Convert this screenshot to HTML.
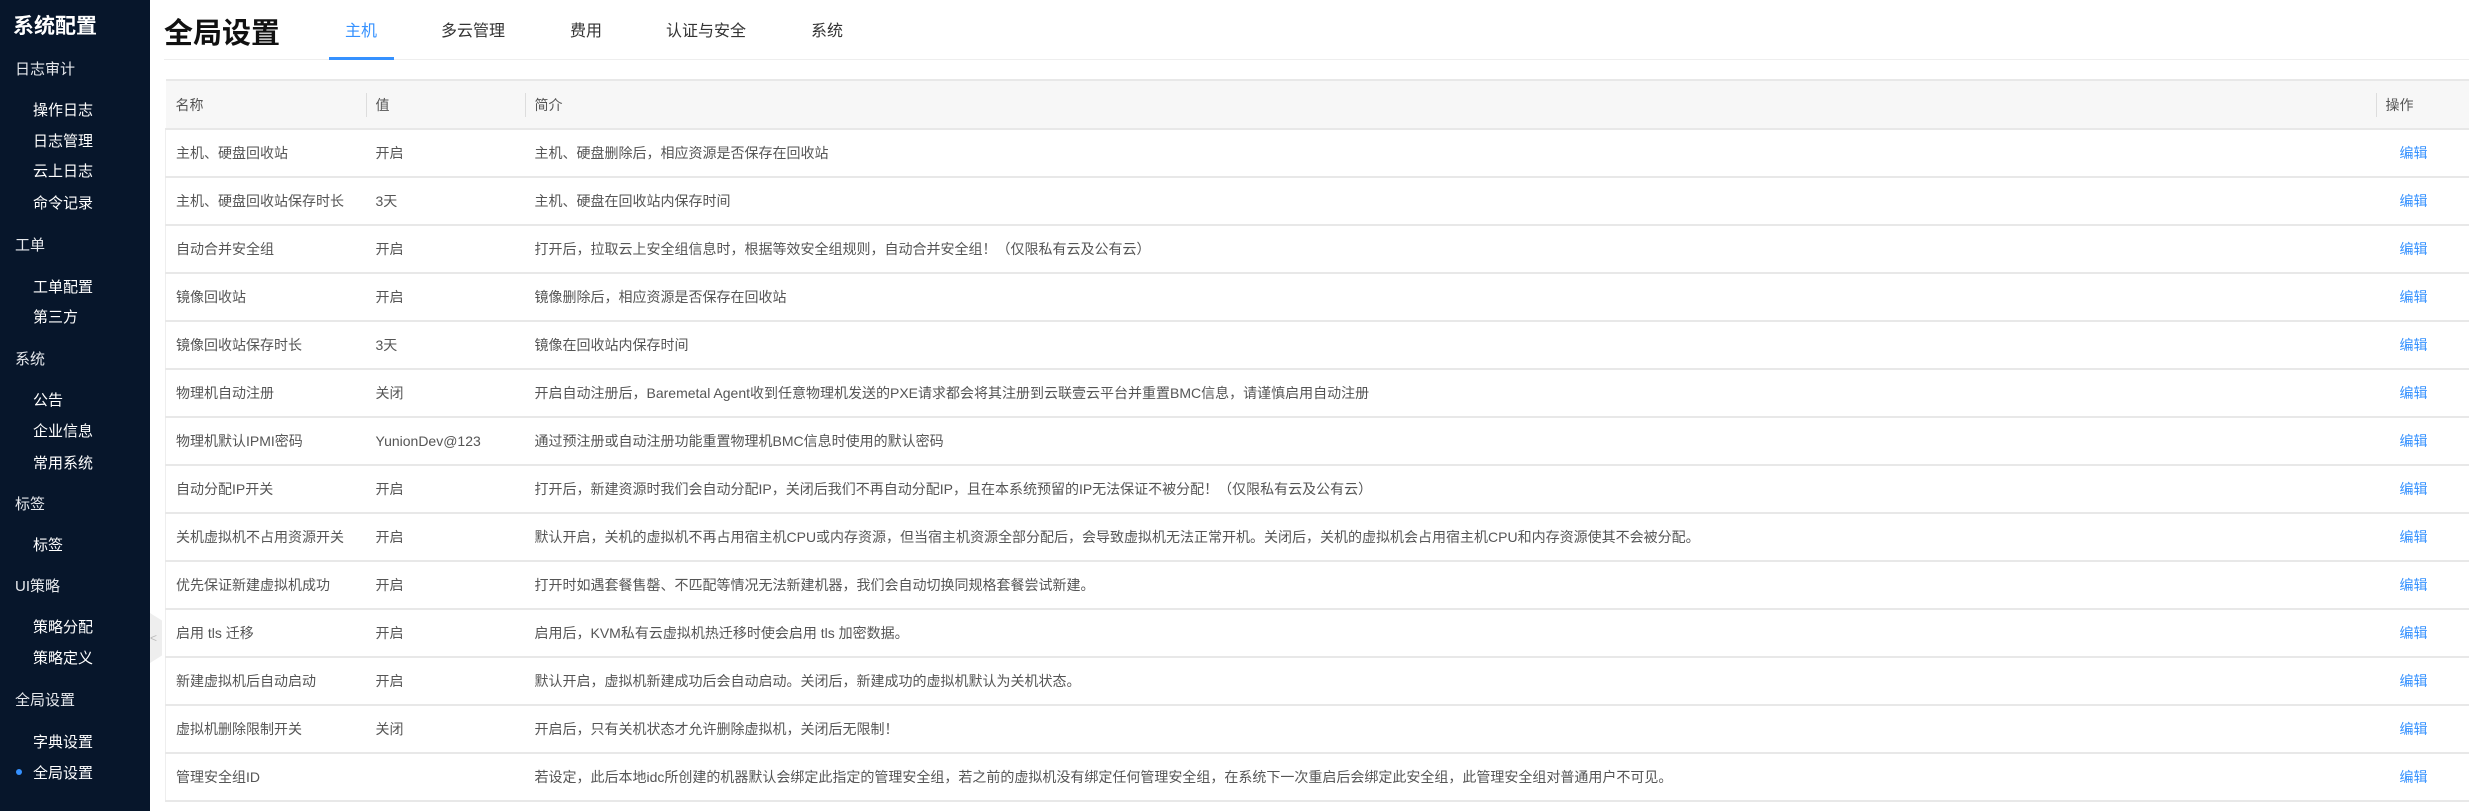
<!DOCTYPE html>
<html><head><meta charset="utf-8"><style>
*{margin:0;padding:0;box-sizing:border-box}
body{width:2469px;height:811px;overflow:hidden;background:#fff;font-family:"Liberation Sans","Noto Sans CJK SC",sans-serif;position:relative}
.side{position:absolute;left:0;top:0;width:150px;height:811px;background:#07162b;color:#fff}
.side div{position:absolute;font-size:15px;white-space:nowrap}
.side .t{font-size:21px;font-weight:bold;left:13px}
.side .s{left:15px;color:#e6e8ec}
.side .i{left:33px;color:#fff}
.dot{position:absolute;left:16px;width:6px;height:6px;border-radius:50%;background:#3591ff}
.handle{position:absolute;left:150px;top:613px;width:12px;height:50px;background:#eee;clip-path:polygon(0 0,100% 15%,100% 85%,0 100%);color:#bbb;font-size:12px;line-height:50px}
.title{position:absolute;left:164px;top:10px;font-size:29px;font-weight:bold;color:#111}
.tab{position:absolute;top:17px;font-size:16px;color:#333}
.ul{position:absolute;left:329px;top:57px;width:65px;height:3px;background:#3591ff}
.div{position:absolute;left:164px;right:0;top:59px;height:1px;background:#eee}
table{position:absolute;left:165px;top:79px;width:2304px;border-collapse:collapse;font-size:14px;color:#555}
th{background:#f7f7f7;height:49px;text-align:left;font-weight:normal;color:#555;border-top:2px solid #e8e8e8;border-bottom:2px solid #e8e8e8;padding-left:10px;position:relative}
th.d:before{content:"";position:absolute;left:0;top:12px;height:24px;width:1px;background:#ddd}
td{height:48px;border-bottom:2px solid #e8e8e8;padding-left:10px;white-space:nowrap}
td:first-child{border-left:1px solid #eee}
a{color:#3591ff;text-decoration:none;padding-left:14px}
</style></head><body>
<div class="side">
<div class="t" style="top:10px">系统配置</div>
<div class="s" style="top:58px">日志审计</div>
<div class="i" style="top:99px">操作日志</div>
<div class="i" style="top:130px">日志管理</div>
<div class="i" style="top:160px">云上日志</div>
<div class="i" style="top:192px">命令记录</div>
<div class="s" style="top:234px">工单</div>
<div class="i" style="top:276px">工单配置</div>
<div class="i" style="top:306px">第三方</div>
<div class="s" style="top:348px">系统</div>
<div class="i" style="top:389px">公告</div>
<div class="i" style="top:420px">企业信息</div>
<div class="i" style="top:452px">常用系统</div>
<div class="s" style="top:493px">标签</div>
<div class="i" style="top:534px">标签</div>
<div class="s" style="top:575px">UI策略</div>
<div class="i" style="top:616px">策略分配</div>
<div class="i" style="top:647px">策略定义</div>
<div class="s" style="top:689px">全局设置</div>
<div class="i" style="top:731px">字典设置</div>
<span class="dot" style="top:769px"></span>
<div class="i" style="top:762px">全局设置</div>
</div>
<div class="handle">&lt;</div>
<div class="title">全局设置</div>
<div class="tab" style="left:345px;color:#3591ff">主机</div>
<div class="tab" style="left:441px">多云管理</div>
<div class="tab" style="left:570px">费用</div>
<div class="tab" style="left:666px">认证与安全</div>
<div class="tab" style="left:811px">系统</div>
<div class="div"></div><div class="ul"></div>
<table>
<tr><th style="width:200px">名称</th><th class="d" style="width:159px">值</th><th class="d" style="width:1851px">简介</th><th class="d">操作</th></tr>
<tr><td>主机、硬盘回收站</td><td>开启</td><td>主机、硬盘删除后，相应资源是否保存在回收站</td><td><a>编辑</a></td></tr>
<tr><td>主机、硬盘回收站保存时长</td><td>3天</td><td>主机、硬盘在回收站内保存时间</td><td><a>编辑</a></td></tr>
<tr><td>自动合并安全组</td><td>开启</td><td>打开后，拉取云上安全组信息时，根据等效安全组规则，自动合并安全组！（仅限私有云及公有云）</td><td><a>编辑</a></td></tr>
<tr><td>镜像回收站</td><td>开启</td><td>镜像删除后，相应资源是否保存在回收站</td><td><a>编辑</a></td></tr>
<tr><td>镜像回收站保存时长</td><td>3天</td><td>镜像在回收站内保存时间</td><td><a>编辑</a></td></tr>
<tr><td>物理机自动注册</td><td>关闭</td><td>开启自动注册后，Baremetal Agent收到任意物理机发送的PXE请求都会将其注册到云联壹云平台并重置BMC信息，请谨慎启用自动注册</td><td><a>编辑</a></td></tr>
<tr><td>物理机默认IPMI密码</td><td>YunionDev@123</td><td>通过预注册或自动注册功能重置物理机BMC信息时使用的默认密码</td><td><a>编辑</a></td></tr>
<tr><td>自动分配IP开关</td><td>开启</td><td>打开后，新建资源时我们会自动分配IP，关闭后我们不再自动分配IP，且在本系统预留的IP无法保证不被分配！（仅限私有云及公有云）</td><td><a>编辑</a></td></tr>
<tr><td>关机虚拟机不占用资源开关</td><td>开启</td><td>默认开启，关机的虚拟机不再占用宿主机CPU或内存资源，但当宿主机资源全部分配后，会导致虚拟机无法正常开机。关闭后，关机的虚拟机会占用宿主机CPU和内存资源使其不会被分配。</td><td><a>编辑</a></td></tr>
<tr><td>优先保证新建虚拟机成功</td><td>开启</td><td>打开时如遇套餐售罄、不匹配等情况无法新建机器，我们会自动切换同规格套餐尝试新建。</td><td><a>编辑</a></td></tr>
<tr><td>启用 tls 迁移</td><td>开启</td><td>启用后，KVM私有云虚拟机热迁移时使会启用 tls 加密数据。</td><td><a>编辑</a></td></tr>
<tr><td>新建虚拟机后自动启动</td><td>开启</td><td>默认开启，虚拟机新建成功后会自动启动。关闭后，新建成功的虚拟机默认为关机状态。</td><td><a>编辑</a></td></tr>
<tr><td>虚拟机删除限制开关</td><td>关闭</td><td>开启后，只有关机状态才允许删除虚拟机，关闭后无限制！</td><td><a>编辑</a></td></tr>
<tr><td>管理安全组ID</td><td></td><td>若设定，此后本地idc所创建的机器默认会绑定此指定的管理安全组，若之前的虚拟机没有绑定任何管理安全组，在系统下一次重启后会绑定此安全组，此管理安全组对普通用户不可见。</td><td><a>编辑</a></td></tr>
</table>
</body></html>
